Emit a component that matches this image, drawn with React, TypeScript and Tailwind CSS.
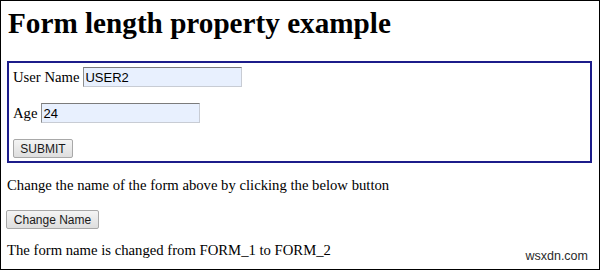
import { useState } from 'react'

const serif = { fontFamily: '"Liberation Serif", "Times New Roman", serif' }

function Field({ label, value }: { label: string; value: string }) {
  return (
    <div className="flex items-center gap-[4px] h-[20px]">
      <span className="text-[14.7px] leading-[17px] text-black">{label}</span>
      <input
        defaultValue={value}
        className="w-[159px] h-[20px] bg-[#e8f0fe] border border-[#c8ccd4] border-t-[#7b7b7b] border-l-[#8e8e8e] px-[1px] text-[13px] text-black outline-none font-['Liberation_Sans',Arial,sans-serif]"
      />
    </div>
  )
}

function PlainButton({ children, width, onClick }: { children: string; width: string; onClick?: () => void }) {
  return (
    <button
      type="button"
      onClick={onClick}
      className={`${width} h-[19px] flex items-center justify-center rounded-[2px] border border-[#a8a8a8] bg-gradient-to-b from-[#f4f4f4] to-[#dedede] text-[12px] leading-none text-[#1a1a1a] font-['Liberation_Sans',Arial,sans-serif]`}
    >
      {children}
    </button>
  )
}

export default function App() {
  const [formName, setFormName] = useState('FORM_2')

  return (
    <div className="relative w-[600px] h-[270px] overflow-hidden bg-white border border-black" style={serif}>
      <div className="pl-[6px] pr-[6px] pt-[6px]">
        <h1 className="pl-[1px] text-[29.2px] leading-[33px] font-bold text-black">Form length property example</h1>

        <form
          name={formName}
          className="mt-[21px] w-[585px] h-[102px] border-2 border-[#1c1c8a] pl-[4px] pt-[4px] flex flex-col gap-[16px]"
          onSubmit={e => e.preventDefault()}
        >
          <Field label="User Name" value="USER2" />
          <Field label="Age" value="24" />
          <div className="-mt-[1px] pt-[1px]">
            <PlainButton width="w-[60px]">SUBMIT</PlainButton>
          </div>
        </form>

        <p className="mt-[14px] text-[14.7px] leading-[17px] text-black">
          Change the name of the form above by clicking the below button
        </p>

        <div className="mt-[16px] -ml-[1px]">
          <PlainButton width="w-[93px]" onClick={() => setFormName('FORM_2')}>
            Change Name
          </PlainButton>
        </div>

        <p className="mt-[13px] text-[14.7px] leading-[17px] text-black">
          The form name is changed from FORM_1 to {formName}
        </p>
      </div>

      <span className="absolute right-[11px] bottom-[3px] text-[12.5px] text-[#2a2a2a] font-['Liberation_Sans',Arial,sans-serif]">
        wsxdn.com
      </span>
    </div>
  )
}
